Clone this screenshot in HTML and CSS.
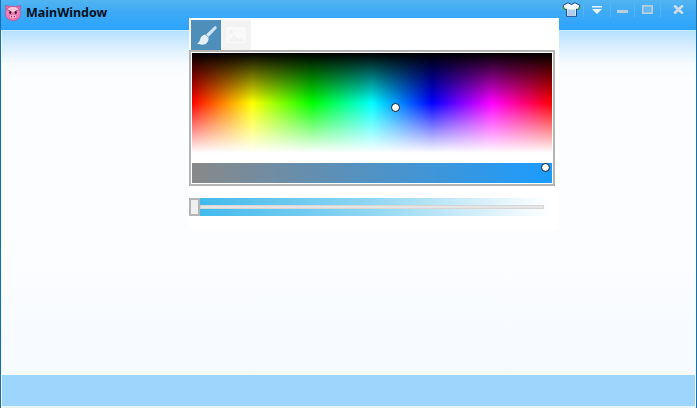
FILE: index.html
```html
<!DOCTYPE html>
<html lang="en">
<head>
<meta charset="utf-8">
<title>MainWindow</title>
<link rel="stylesheet" href="styles.css">
</head>
<body>
<div class="window">
  <header class="titlebar">
    <svg class="pig" viewBox="0 0 18 18" width="18" height="18">
      <path d="M1.5 1.5 L6.5 2.5 L5 7.5 L2 6 Z M16.5 1.5 L11.5 2.5 L13 7.5 L16 6 Z" fill="#ef6aa8" stroke="#b8407c" stroke-width=".6"/>
      <ellipse cx="9" cy="9.5" rx="7.6" ry="7.2" fill="#f47fb8" stroke="#c4508e" stroke-width=".8"/>
      <ellipse cx="9" cy="5.5" rx="5" ry="2.6" fill="#fcc0dd"/>
      <path d="M4.5 6.5 L7.5 8 M13.5 6.5 L10.5 8" stroke="#50203c" stroke-width="1"/>
      <circle cx="6.2" cy="8.8" r="1.1" fill="#301020"/><circle cx="11.8" cy="8.8" r="1.1" fill="#301020"/>
      <ellipse cx="9" cy="12.6" rx="4" ry="2.5" fill="#fba8d0" stroke="#c4508e" stroke-width=".6"/>
      <circle cx="7.6" cy="12.6" r=".7" fill="#902a60"/><circle cx="10.4" cy="12.6" r=".7" fill="#902a60"/>
    </svg>
    <span class="title">MainWindow</span>
    <div class="controls">
      <button class="ctl ctl-skin" aria-label="Skin">
        <svg viewBox="0 0 19 15" width="19" height="15">
          <path d="M1 3.5 L6 0.7 L9.5 2.5 L13 0.7 L18 3.5 L16.3 7.5 L14.5 7 L14.5 14.3 L4.5 14.3 L4.5 7 L2.7 7.5 Z" fill="#f2f8fd" stroke="#1f4a84" stroke-width="1"/>
          <path d="M5.5 7.5 H13.5 V13.5 H5.5 Z" fill="#aecdec"/>
          <path d="M16.3 7.7 L18.4 5 M2.7 7.7 L0.6 5" stroke="#3fa52a" stroke-width="1.3"/>
        </svg>
      </button>
      <button class="ctl ctl-menu" aria-label="Menu">
        <svg viewBox="0 0 10 8" width="10" height="8">
          <path d="M0 0 H10 V1.6 H0 Z M0 3 H10 L5 8 Z" fill="#eaf4fb"/>
        </svg>
      </button>
      <button class="ctl ctl-min" aria-label="Minimize">
        <svg viewBox="0 0 11 3" width="11" height="3"><rect width="11" height="3" fill="#bccfe0"/></svg>
      </button>
      <button class="ctl ctl-max" aria-label="Maximize">
        <svg viewBox="0 0 11 9" width="11" height="9"><rect x=".8" y=".8" width="9.4" height="7.4" fill="#66b8ee" stroke="#bccfe0" stroke-width="1.6"/></svg>
      </button>
      <button class="ctl ctl-close" aria-label="Close">
        <svg viewBox="0 0 11 9" width="11" height="9"><path d="M1.2 .5 L9.8 8.5 M9.8 .5 L1.2 8.5" stroke="#d0dde8" stroke-width="2.6"/></svg>
      </button>
    </div>
  </header>
  <main class="content"></main>
  <footer class="statusbar"></footer>

  <section class="panel">
    <div class="tabs">
      <div class="tab tab-active">
        <svg viewBox="0 0 30 30" width="30" height="30">
          <path d="M24 6 L15 14.5 L17.5 17 L25.5 8.5 Q26 6 24 6 Z" fill="#cfe4f3"/>
          <path d="M14 14.5 Q9.5 15.5 9 20 Q8.5 22.5 6 23.5 Q11 25.5 14.5 24 Q18 21.5 17.5 17.5 Z" fill="#e3f0f9"/>
        </svg>
      </div>
      <div class="tab tab-idle">
        <svg viewBox="0 0 30 30" width="30" height="30">
          <rect x="5" y="7" width="20" height="16" rx="2" fill="#f9f9f9"/>
          <circle cx="10" cy="12" r="2.2" fill="#f3f3f3"/>
          <path d="M6.5 22 L13 15 L17.5 19 L20 17 L24 22 Z" fill="#f3f3f3"/>
        </svg>
      </div>
    </div>
    <div class="picker">
      <div class="spectrum"><span class="knob knob-map"></span></div>
      <div class="saturation"><span class="knob knob-sat"></span></div>
    </div>
    <div class="alpha">
      <div class="alpha-track"></div>
      <div class="alpha-thumb"></div>
    </div>
  </section>
</div>
</body>
</html>
```
FILE: styles.css
```css
* { box-sizing: border-box; }
html, body { margin: 0; padding: 0; }
body { width: 697px; height: 408px; overflow: hidden; background: #fcfdff; font-family: "Noto Sans", sans-serif; }
.window {
  position: relative;
  width: 697px;
  height: 408px;
  display: flex;
  flex-direction: column;
  border-left: 1px solid #1a6ea8;
  border-right: 1px solid #1a6ea8;
  background: #f8fbff;
}
.titlebar {
  height: 31px;
  flex: none;
  display: flex;
  align-items: flex-start;
  padding: 0 0 0 3px;
  background: linear-gradient(#52b4f2 0, #3eaaf6 12px, #2ca4fc 30px);
  border-bottom: 1px solid #c9e9ff;
}
.pig { flex: none; margin-top: 4px; }
.title { margin: 4px 0 0 4px; font-size: 12.5px; line-height: 18px; font-weight: 700; color: #03101c; }
.controls { margin-left: auto; margin-top: 2px; display: flex; align-items: center; height: 15px; }
.ctl {
  border: 0;
  padding: 0;
  background: none;
  display: flex;
  align-items: center;
  justify-content: center;
  height: 15px;
  border-right: 1px solid #52b5f5;
}
.ctl svg { display: block; }
.ctl-skin { width: 24px; }
.ctl-menu { width: 27px; }
.ctl-min { width: 24px; padding-top: 4px; }
.ctl-max { width: 26px; }
.ctl-close { width: 35px; border-right: 0; }
.content {
  flex: 1;
  border-left: 1px solid #eef7ff;
  background: linear-gradient(#b6e1fe 0, #dff1fe 19px, #f8fcff 34px, #fcfdff 50px, #fcfdff 60%, #f5faff 100%);
}
.statusbar {
  height: 33px;
  flex: none;
  border-left: 1px solid #fff;
  border-right: 1px solid #fff;
  border-bottom: 2px solid #e8f5ff;
  background: #9dd6fd;
}
.panel {
  position: absolute;
  left: 188px;
  top: 18px;
  width: 370px;
  height: 212px;
  padding-top: 2px;
  background: #fff;
}
.tabs { display: flex; height: 30px; margin-left: 2px; }
.tab { width: 30px; height: 30px; }
.tab svg { display: block; }
.tab-active { background: #4d8ebb; }
.tab-idle { background: #f3f3f3; }
.picker {
  width: 366px;
  height: 136px;
  padding: 1px;
  border: 2px solid #b4b4b4;
  background: #fff;
}
.spectrum {
  position: relative;
  width: 360px;
  height: 100px;
  background:
    linear-gradient(#000 0, rgba(0,0,0,0) 50%, rgba(255,255,255,0) 50%, #fff 100%),
    linear-gradient(90deg, #f00, #ff0 16.67%, #0f0 33.33%, #0ff 50%, #00f 66.67%, #f0f 83.33%, #f00);
}
.saturation {
  position: relative;
  width: 360px;
  height: 20px;
  margin-top: 10px;
  background: linear-gradient(90deg, #888, #1b9cff);
}
.knob {
  position: absolute;
  width: 9px;
  height: 9px;
  border-radius: 50%;
  background: #fff;
  border: 1.5px solid #0a1a2a;
}
.knob-map { left: 199px; top: 50px; }
.knob-sat { left: 349px; top: 0; }
.alpha {
  position: relative;
  width: 364px;
  height: 18px;
  margin-top: 12px;
  background: linear-gradient(90deg, #3db8ec, #8fd6f3 50%, #e8f6fc 88%, #fff 100%);
}
.alpha-track {
  position: absolute;
  left: 11px;
  right: 9px;
  top: 7px;
  height: 4px;
  background: #e4e4e4;
  border: 1px solid #d6d6d6;
}
.alpha-thumb {
  position: absolute;
  left: 0;
  top: 0;
  width: 11px;
  height: 18px;
  background: #efefef;
  border: 2px solid #b4b4b4;
}
```
